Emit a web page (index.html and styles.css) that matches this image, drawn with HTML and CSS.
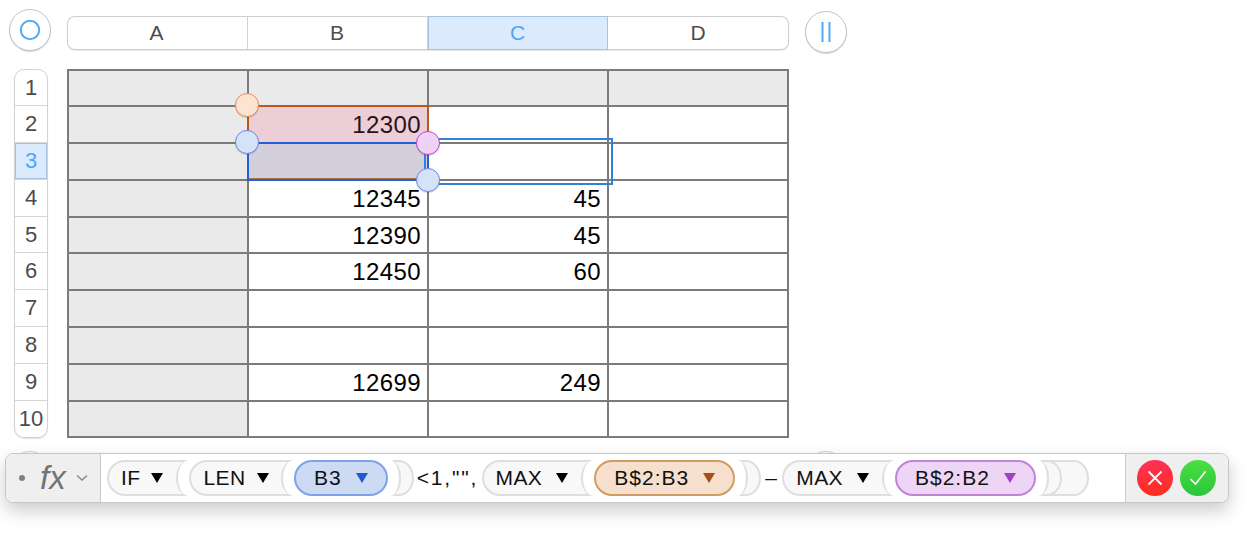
FILE: index.html
```html
<!DOCTYPE html>
<html lang="en">
<head>
<meta charset="utf-8">
<title>Formula editor</title>
<link rel="stylesheet" href="styles.css">
</head>
<body>
<div class="page">
  <div class="topbar">
    <button class="round-btn">
      <svg width="22" height="22" viewBox="0 0 22 22"><circle cx="11" cy="11" r="9.2" fill="none" stroke="#50a9fb" stroke-width="2"/></svg>
    </button>
    <div class="columns">
      <div class="col">A</div>
      <div class="col">B</div>
      <div class="col col-on">C</div>
      <div class="col">D</div>
    </div>
    <button class="round-btn round-right">
      <svg width="10" height="22" viewBox="0 0 10 22"><path d="M1.5 1v20M8.5 1v20" fill="none" stroke="#50a9fb" stroke-width="2"/></svg>
    </button>
  </div>

  <div class="sheet">
    <div class="rows">
      <div class="row r36">1</div>
      <div class="row r37">2</div>
      <div class="row r37 row-on">3</div>
      <div class="row r37">4</div>
      <div class="row r36">5</div>
      <div class="row r37">6</div>
      <div class="row r37">7</div>
      <div class="row r37">8</div>
      <div class="row r37">9</div>
      <div class="row r36">10</div>
    </div>
    <div class="table">
      <div class="cell hd"></div><div class="cell hd"></div><div class="cell hd"></div><div class="cell hd"></div>
      <div class="cell hd"></div><div class="cell">12300</div><div class="cell"></div><div class="cell"></div>
      <div class="cell hd"></div><div class="cell"></div><div class="cell"></div><div class="cell"></div>
      <div class="cell hd"></div><div class="cell">12345</div><div class="cell">45</div><div class="cell"></div>
      <div class="cell hd"></div><div class="cell">12390</div><div class="cell">45</div><div class="cell"></div>
      <div class="cell hd"></div><div class="cell">12450</div><div class="cell">60</div><div class="cell"></div>
      <div class="cell hd"></div><div class="cell"></div><div class="cell"></div><div class="cell"></div>
      <div class="cell hd"></div><div class="cell"></div><div class="cell"></div><div class="cell"></div>
      <div class="cell hd"></div><div class="cell">12699</div><div class="cell">249</div><div class="cell"></div>
      <div class="cell hd"></div><div class="cell"></div><div class="cell"></div><div class="cell"></div>

      <div class="range range-orange"></div>
      <div class="range range-blue"></div>
      <div class="range range-edit"></div>
      <span class="handle h-orange"></span>
      <span class="handle h-blue h-blue-a"></span>
      <span class="handle h-pink"></span>
      <span class="handle h-blue h-blue-b"></span>
    </div>
  </div>

  <div class="bar-wrap">
    <span class="peek peek-left"></span>
    <span class="peek peek-right"></span>
    <div class="bar">
      <div class="bar-left">
        <span class="dot"></span>
        <span class="fx">fx</span>
        <svg class="chev" width="12" height="8" viewBox="0 0 12 8"><path d="M1 1.5l5 4.5 5-4.5" fill="none" stroke="#8a8a8a" stroke-width="1.5"/></svg>
      </div>
      <div class="formula">
        <div class="head fn-if">IF<i class="tri"></i></div><div class="open"></div>
        <div class="head fn-len">LEN<i class="tri"></i></div><div class="open"></div>
        <div class="ref ref-blue">B3<i class="tri"></i></div>
        <div class="close"></div>
        <span class="lit lit-a">&lt;1,"",</span>
        <div class="head fn-max">MAX<i class="tri"></i></div><div class="open"></div>
        <div class="ref ref-orange">B$2:B3<i class="tri"></i></div>
        <div class="close"></div>
        <span class="lit lit-b">–</span>
        <div class="head fn-max">MAX<i class="tri"></i></div><div class="open"></div>
        <div class="ref ref-pink">B$2:B2<i class="tri"></i></div>
        <div class="close"></div>
        <div class="close close-outer"></div>
      </div>
      <div class="bar-right">
        <div class="act act-no">
          <svg width="16" height="16" viewBox="0 0 16 16"><path d="M1.5 1.5l13 13M14.5 1.5l-13 13" fill="none" stroke="#fff" stroke-width="1.8"/></svg>
        </div>
        <div class="act act-ok">
          <svg width="18" height="16" viewBox="0 0 18 16"><path d="M1.5 9l5 5L16.5 1.5" fill="none" stroke="#fff" stroke-width="1.6"/></svg>
        </div>
      </div>
    </div>
  </div>
</div>
</body>
</html>
```

FILE: styles.css
```css
* { box-sizing: border-box; }
html, body { margin: 0; padding: 0; background: #fff; }
body { font-family: "Liberation Sans", Arial, sans-serif; width: 1250px; height: 534px; overflow: hidden; }

.page { padding: 9px 0 0 5px; }

.topbar { display: flex; align-items: flex-start; padding-left: 4px; }
.round-btn {
  width: 42px; height: 42px; margin: 0; padding: 0;
  display: flex; align-items: center; justify-content: center;
  background: #fff; border: 1px solid #c4c4c4; border-radius: 50%;
  box-shadow: 0 1px 1px rgba(0,0,0,.16);
}
.round-right { margin: 2px 0 0 16px; }

.columns {
  display: flex; width: 722px; height: 34px; margin: 7px 0 0 16px;
  border-radius: 8px; background: #fff;
  box-shadow: 0 0 0 1px #cfcfcf inset, 0 1px 1px rgba(0,0,0,.1);
  overflow: hidden;
}
.col {
  width: 180px; display: flex; align-items: center; justify-content: center;
  font-size: 21px; color: #4c4c4c; border-right: 1px solid #d2d2d2;
  padding-right: 1px;
}
.col:first-child { width: 181px; }
.col:last-child { width: 181px; border-right: 0; }
.col-on { background: #dbeafc; color: #50a4f6; box-shadow: 0 0 0 1px #a9c3df inset; border-right: 0; }

.sheet { display: flex; align-items: flex-start; margin-top: 16px; padding-left: 9px; }

.rows {
  width: 34px; height: 369px; margin-right: 19px;
  border: 1px solid #d2d2d2; border-radius: 10px; overflow: hidden;
  box-shadow: 0 1px 1px rgba(0,0,0,.12);
}
.row {
  display: flex; align-items: center; justify-content: center;
  font-size: 22px; color: #4c4c4c; border-bottom: 1px solid #d6d6d6;
}
.row:last-child { border-bottom: 0; }
.r36 { height: 36px; }
.r37 { height: 37px; }
.row-on { background: #dbeafc; color: #50a4f6; box-shadow: 0 0 0 1px #a9c3df inset; }

.table {
  position: relative;
  display: grid;
  grid-template-columns: repeat(4, 178px);
  grid-template-rows: 34px 35px 35px 35px 34px 35px 35px 35px 35px 34px;
  gap: 2px; padding: 2px;
  background: #7b7b7b;
}
.cell {
  background: #fff; color: #000; font-size: 24px; line-height: 35px;
  letter-spacing: .4px;
  text-align: right; padding-right: 6px; white-space: nowrap;
}
.hd { background: #eaeaea; }

.range { position: absolute; }
.range-orange {
  left: 180px; top: 36px; width: 182px; height: 75px;
  border: 2px solid #b9581c; background: rgba(175,59,91,.25);
}
.range-blue {
  left: 180px; top: 73px; width: 182px; height: 39px;
  border: 2px solid #2160da; background: rgba(120,216,244,.2);
}
.range-edit {
  left: 357px; top: 69px; width: 189px; height: 47px;
  border: 2px solid #3181d8;
}
.handle {
  position: absolute; width: 24px; height: 24px; border-radius: 50%;
  border: 1px solid; box-shadow: 0 1px 1px rgba(0,0,0,.15);
}
.h-orange { left: 168px; top: 24px; background: #fbe4d2; border-color: #f08a4b; }
.h-blue { background: #d6e2f7; border-color: #6f84ee; }
.h-blue-a { left: 168px; top: 61px; }
.h-blue-b { left: 349px; top: 99px; }
.h-pink { left: 349px; top: 62px; background: #eed3f7; border-color: #bb45d0; }

.bar-wrap { position: relative; width: 1224px; margin-top: 15px; }
.peek {
  position: absolute; top: -2px; width: 42px; height: 42px; border-radius: 50%;
  background: #fff; border: 1px solid #d0d0d0;
}
.peek-left { left: 4px; }
.peek-right { left: 800px; }

.bar {
  position: relative;
  display: flex; width: 1224px; height: 50px;
  border: 1px solid #c6c6c6; border-radius: 8px; background: #fff;
  box-shadow: 0 8px 18px rgba(0,0,0,.2);
  overflow: hidden;
}
.bar-left {
  position: relative;
  width: 95px; display: flex; align-items: center; flex: none;
  background: #efefef; border-right: 1px solid #c9c9c9;
  padding-left: 13px; padding-bottom: 1px;
}
.dot { width: 6px; height: 6px; border-radius: 50%; background: #808080; }
.fx { margin-left: 15px; font-size: 33px; font-style: italic; color: #737373; line-height: 1; }
.chev { margin-left: 10px; margin-top: 1px; }

.formula {
  flex: 1; display: flex; align-items: center; padding: 0 0 1px 6px;
  font-size: 21px; letter-spacing: .4px; color: #111; min-width: 0;
}
.head {
  height: 36px; display: flex; align-items: center;
  padding-left: 12px; padding-right: 25px;
  background: #f8f8f8; border: 2px solid #dedede; border-right: 0;
  border-radius: 18px 0 0 18px; flex: none;
}
.fn-if { padding-right: 26px; }
.fn-len { padding-right: 25.5px; }
.fn-max { padding-right: 26px; }
.tri {
  margin-left: 11px; width: 0; height: 0;
  border-left: 6.5px solid transparent; border-right: 6.5px solid transparent;
  border-top: 10px solid #000;
}
.fn-max .tri { margin-left: 14px; }
.open {
  width: 13px; height: 36px; margin-left: -13px; flex: none;
  background: #fff; border-left: 2px solid #dedede;
  border-radius: 13px 0 0 13px / 18px 0 0 18px;
}
.ref {
  position: relative; z-index: 2;
  height: 36px; display: flex; align-items: center; flex: none;
  padding: 0 18px; border: 2px solid; border-radius: 18px;
  letter-spacing: 1px;
  box-shadow: 0 0 0 3px #fff;
}
.ref .tri { margin-left: 14px; }
.ref-blue { background: #ccdaf3; border-color: #7fa2e8; }
.ref-blue .tri { border-top-color: #1f5bd0; }
.ref-orange { background: #f6e0cd; border-color: #d49a64; }
.ref-orange .tri { border-top-color: #a64f16; }
.ref-pink { background: #eed5f5; border-color: #c083d8; }
.ref-pink .tri { border-top-color: #a143c0; }

.close {
  position: relative; z-index: 1;
  width: 26px; height: 36px; flex: none;
  background: #f8f8f8; border: 2px solid #dedede; border-left: 0;
  border-radius: 0 15px 15px 0 / 0 18px 18px 0;
}
.close::before {
  content: ""; position: absolute; left: 0; top: -2px; bottom: -2px; width: 11px;
  background: #fff; border-right: 2px solid #dedede;
  border-radius: 0 11px 11px 0 / 0 18px 18px 0;
}
.close-outer { z-index: 0; margin-left: -14px; width: 41px; }
.close-outer::before { display: none; }

.lit { flex: none; white-space: nowrap; }
.lit-a { margin: 0 3.5px 0 3px; letter-spacing: 1.8px; }
.lit-b { margin: 0 5px 0 4px; }

.bar-right {
  width: 103px; flex: none; display: flex; align-items: center; gap: 7px;
  padding: 0 0 1px 11px; background: #efefef; border-left: 1px solid #c9c9c9;
}
.act {
  width: 36px; height: 36px; border-radius: 50%;
  display: flex; align-items: center; justify-content: center; flex: none;
}
.act-no { background: linear-gradient(#ff3157, #ff2d20); }
.act-ok { background: linear-gradient(#4cdf42, #2bc53c); }
```
